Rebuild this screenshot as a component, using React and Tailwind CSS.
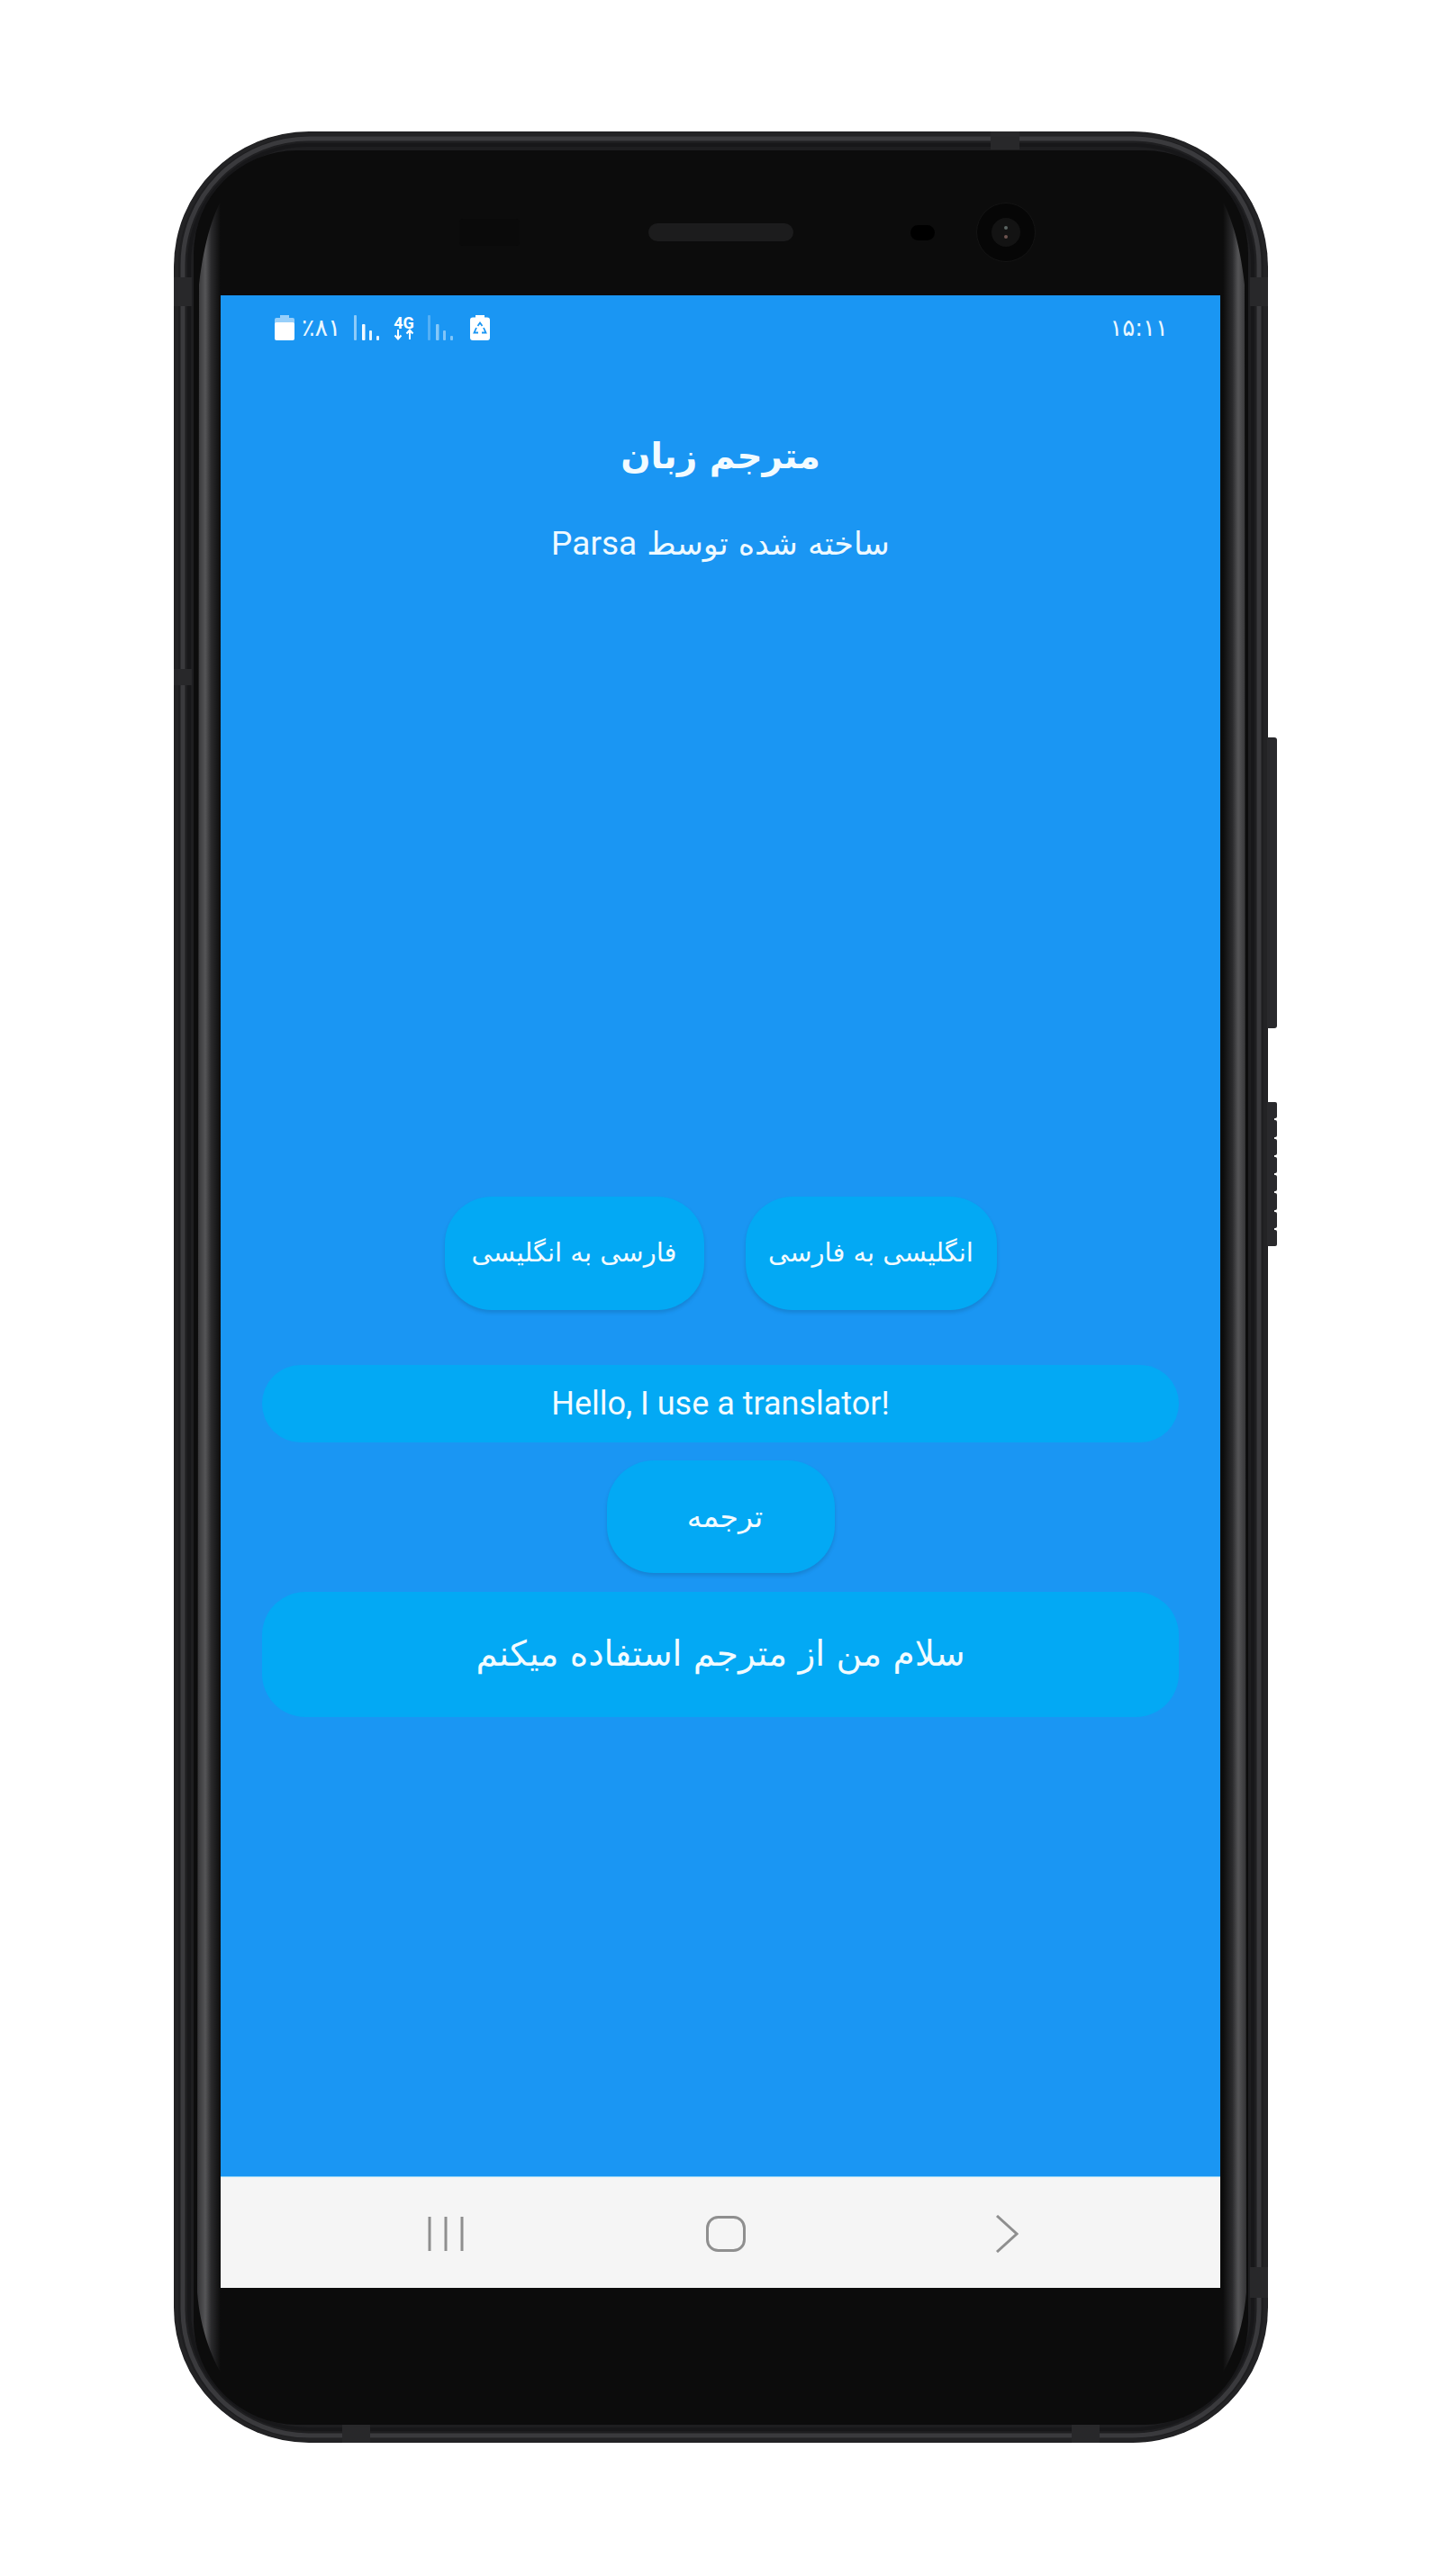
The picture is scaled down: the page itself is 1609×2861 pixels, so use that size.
import React from "react";

const ar = "font-['DejaVu_Sans',sans-serif]";

function Signal({ dim }) {
  const o = dim ? 0.5 : 1;
  return (
    <svg width="28" height="28" viewBox="0 0 28 28" className="shrink-0">
      <rect x="0" y="0" width="3" height="28" rx="1" fill="#fff" opacity={0.5 * o} />
      <rect x="9" y="10" width="3.5" height="18" rx="1" fill="#fff" opacity={0.95 * o} />
      <rect x="17" y="17" width="3" height="11" rx="1" fill="#fff" opacity={0.9 * o} />
      <rect x="25" y="23" width="3" height="5" rx="1" fill="#fff" opacity={0.9 * o} />
    </svg>
  );
}

function Frame() {
  return (
    <svg viewBox="0 0 1215 2567" className="absolute inset-0 h-full w-full pointer-events-none">
      <defs>
        <linearGradient id="streak" gradientUnits="userSpaceOnUse" x1="26" y1="0" x2="52" y2="0">
          <stop offset="0" stopColor="#333335" />
          <stop offset="0.35" stopColor="#555557" />
          <stop offset="0.6" stopColor="#2a2a2c" />
          <stop offset="1" stopColor="#0c0c0c" />
        </linearGradient>
      </defs>
      <rect x="3" y="3" width="1209" height="2561" rx="146" fill="none" stroke="#232325" strokeWidth="4" />
      <rect x="10" y="8" width="1195" height="2551" rx="140" fill="none" stroke="#3a3a3d" strokeWidth="5" />
      <rect x="17" y="15" width="1181" height="2537" rx="132" fill="none" stroke="#171719" strokeWidth="4" />
      <rect x="907" y="0" width="32" height="20" fill="#28282a" />
      <rect x="187" y="2547" width="31" height="20" fill="#28282a" />
      <rect x="997" y="2547" width="31" height="20" fill="#28282a" />
      <rect x="0" y="162" width="20" height="32" fill="#28282a" />
      <rect x="1195" y="162" width="20" height="32" fill="#28282a" />
      <rect x="0" y="597" width="20" height="18" fill="#28282a" />
      <rect x="1195" y="2372" width="20" height="34" fill="#28282a" />
    </svg>
  );
}

function Streaks() {
  const d =
    "M76 48 C55 62 36 100 28 170 L26 2400 C30 2450 50 2500 82 2525 C65 2490 52 2440 52 2380 L52 180 C52 130 60 85 76 48 Z";
  return (
    <svg viewBox="0 0 1215 2567" className="absolute inset-0 h-full w-full pointer-events-none">
      <path d={d} fill="url(#streak)" />
      <path d={d} fill="url(#streak)" transform="translate(1217 0) scale(-1 1)" />
    </svg>
  );
}

export default function App() {
  const pill = "bg-[#03a9f4] text-[#f2fbff] flex items-center justify-center";
  const raised = "shadow-[0_3px_4px_rgba(0,0,0,0.13)]";
  return (
    <div className="bg-white w-[1609px] h-[2861px] pt-[146px] pl-[193px]">
      <div className="relative w-[1215px] h-[2567px] rounded-[150px] bg-[#1e1e20]">
        {/* side keys */}
        <div className="absolute left-[1213px] top-[673px] w-[12px] h-[323px] rounded-r-[3px] bg-[#29292c]" />
        <div className="absolute left-[1213px] top-[1078px] w-[12px] h-[160px] flex flex-col gap-[2px] bg-[linear-gradient(to_right,#29292c_9px,transparent_9px)]">
          {[0, 1, 2, 3, 4, 5, 6, 7].map((i) => (
            <div key={i} className="flex-1 rounded-r-[2px] bg-[#29292c]" />
          ))}
        </div>
        <Frame />
        <div className="absolute left-[22px] top-[21px] w-[1171px] h-[2526px] rounded-[115px] bg-[#0c0c0c] pt-0 pl-[30px]">
          {/* top bezel */}
          <div className="relative z-10 h-[161px] w-[1110px] flex items-center pt-[21px]">
            <div className="ml-[265px] w-[67px] h-[30px] rounded-[4px] bg-[#0a0a0a]" />
            <div className="ml-[143px] w-[161px] h-[20px] rounded-full bg-[#1c1c1d]" />
            <div className="ml-[130px] w-[27px] h-[17px] rounded-full bg-black" />
            <div className="ml-[46px] w-[66px] h-[66px] rounded-full bg-[#060606] border border-[#141414] flex items-center justify-center">
              <div className="w-[32px] h-[32px] rounded-full bg-[#131313] flex flex-col items-center justify-center gap-[6px]">
                <div className="w-[4px] h-[4px] rounded-full bg-[#5c6664]" />
                <div className="w-[4px] h-[4px] rounded-full bg-[#6e5450]" />
              </div>
            </div>
          </div>

          {/* screen */}
          <div className="relative z-10 w-[1110px] h-[2213px] bg-[#1a96f3] flex flex-col">
            <div className="h-[72px] pl-[60px] pr-[58px] flex items-center text-[#eaf7ff]">
              <svg width="22" height="28" viewBox="0 0 22 28" className="shrink-0">
                <rect x="6" y="0" width="10" height="3" fill="#fff" opacity="0.55" />
                <rect x="0" y="3" width="22" height="8" rx="2" fill="#fff" opacity="0.55" />
                <rect x="0" y="8" width="22" height="20" rx="2" fill="#fff" />
              </svg>
              <span dir="ltr" className={`${ar} ml-[8px] w-[41px] text-[27px] leading-[28px] whitespace-nowrap`}>٪۸۱</span>
              <div className="ml-[17px]"><Signal /></div>
              <div className="ml-[14px] w-[27px] flex flex-col items-center text-white">
                <span className="font-['Roboto',sans-serif] font-bold text-[18px] leading-[15px]">4G</span>
                <svg width="26" height="13" viewBox="0 0 26 13" className="-mt-[1px]">
                  <path d="M6 1V11M2.5 7.5L6 11.5L9.500 7.5M19 12V2M15.500 5.500L19 1.500L22.500 5.500" fill="none" stroke="#fff" strokeWidth="2" />
                </svg>
              </div>
              <div className="ml-[13px]"><Signal dim /></div>
              <svg width="22" height="28" viewBox="0 0 22 28" className="ml-[19px] shrink-0">
                <rect x="6" y="0" width="10" height="4" fill="#fff" />
                <rect x="0" y="2.500" width="22" height="25.500" rx="3" fill="#fff" />
                <path d="M8.500 12L11 8.500L13.500 12M15 14L17.500 19.500H13M9 19.500H4.500L7 14" fill="none" stroke="#1a96f3" strokeWidth="1.800" />
              </svg>
              <span dir="ltr" className={`${ar} ml-auto text-[26px] leading-[28px]`}>۱۵:۱۱</span>
            </div>

            <h1 dir="rtl" className={`${ar} mt-[82px] text-center font-bold text-[39px] leading-[50px] text-[#f2fbff]`}>مترجم زبان</h1>
            <p dir="rtl" className={`${ar} mt-[47px] text-center text-[35px] leading-[50px] text-[#eef9ff]`}>ساخته شده توسط <span className="font-['Roboto',sans-serif] text-[37px]">Parsa</span></p>

            <div dir="rtl" className="mt-[700px] flex justify-center gap-[46px]">
              <button className={`${pill} ${raised} ${ar} w-[279px] h-[126px] rounded-[52px] text-[29px] whitespace-nowrap`}>انگلیسی به فارسی</button>
              <button className={`${pill} ${raised} ${ar} w-[288px] h-[126px] rounded-[52px] text-[29px] whitespace-nowrap`}>فارسی به انگلیسی</button>
            </div>

            <div className={`${pill} mt-[61px] mx-[46px] h-[86px] rounded-full font-['Roboto',sans-serif] text-[36px]`}>Hello, I use a translator!</div>

            <button className={`${pill} ${raised} ${ar} self-center mt-[20px] w-[253px] h-[125px] rounded-[52px] text-[33px] pl-[10px]`}>ترجمه</button>

            <div dir="rtl" className={`${pill} ${ar} mt-[21px] mx-[46px] h-[139px] rounded-[48px] text-[39px]`}>سلام من از مترجم استفاده میکنم</div>

            <div className="flex-1" />

            <div className="h-[124px] bg-[#f5f5f5] border-t border-[#8fd3f8] flex items-center pl-[228px] pt-[2px]">
              <svg width="44" height="40" viewBox="0 0 44 40" className="shrink-0">
                <path d="M4 1V39M22 1V39M40 1V39" fill="none" stroke="#8f8f8f" strokeWidth="3" />
              </svg>
              <svg width="44" height="40" viewBox="0 0 44 40" className="ml-[267px] shrink-0">
                <rect x="1.500" y="1.500" width="41" height="37" rx="12" fill="none" stroke="#8f8f8f" strokeWidth="3" />
              </svg>
              <svg width="26" height="42" viewBox="0 0 26 42" className="ml-[277px] shrink-0">
                <path d="M2 1L24 21L2 41" fill="none" stroke="#8f8f8f" strokeWidth="3" />
              </svg>
            </div>
          </div>
        </div>
        <Streaks />
      </div>
    </div>
  );
}
